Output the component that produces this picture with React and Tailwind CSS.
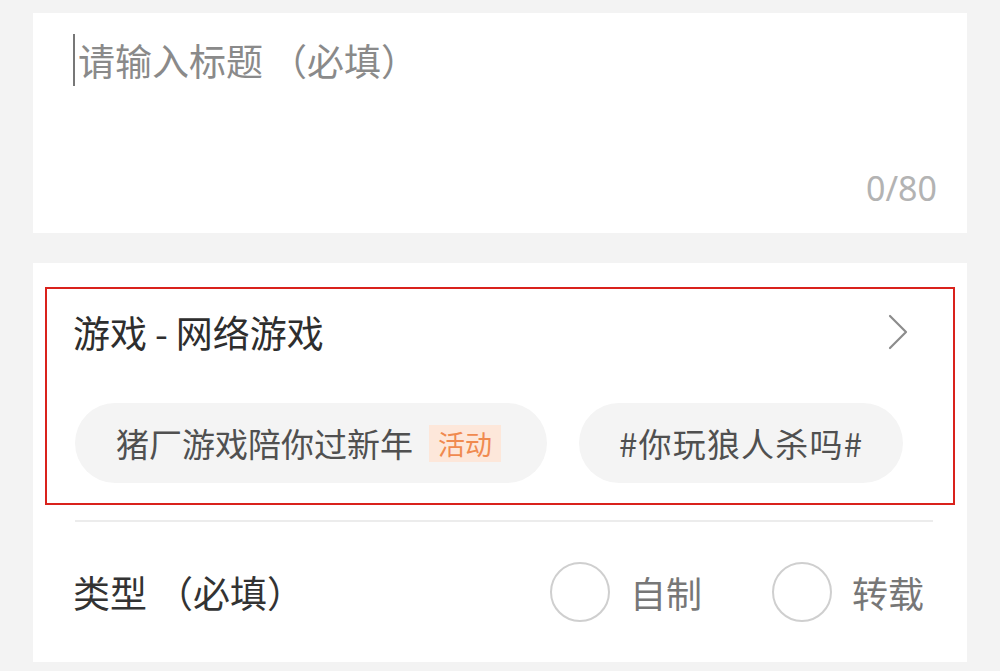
import React from "react";

const font = { fontFamily: '"Noto Sans CJK SC", "Noto Sans", sans-serif' };

function Radio({ label }) {
  return (
    <div className="flex items-center">
      <div className="w-[60px] h-[60px] rounded-full border-2 border-[#cfcfcf] bg-white" />
      <span className="ml-[20px] text-[36px] leading-none text-[#777]">{label}</span>
    </div>
  );
}

export default function App() {
  return (
    <div className="w-[1000px] h-[671px] bg-[#f3f3f3] overflow-hidden" style={font}>
      <div className="pt-[13px] pl-[33px]">
        {/* title card */}
        <div className="w-[934px] h-[220px] bg-white relative flex flex-col">
          <div className="flex items-center pt-[21px] pl-[40px]">
            <div className="w-[2px] h-[52px] bg-[#777] mr-[3px]" />
            <span className="text-[37px] leading-[50px] text-[#8a8a8a]">
              请输入标题<span className="mx-[7px]">（必填）</span>
            </span>
          </div>
          <div className="mt-auto mb-[28px] self-end pr-[30px] text-[34px] leading-none text-[#b3b3b3]" style={{ fontFamily: '"Noto Sans", sans-serif' }}>
            0/80
          </div>
        </div>

        {/* category card */}
        <div className="mt-[30px] w-[934px] h-[399px] bg-white pt-[24px] px-[12px]">
          <div className="h-[218px] border-2 border-[#d9221c] flex flex-col">
            <div className="h-[86px] flex items-center justify-between pl-[26px] pr-[44px]">
              <span className="text-[37px] leading-none text-[#2e2e2e]">
                游戏<span className="mx-[8px]">-</span>网络游戏
              </span>
              <svg width="22" height="36" viewBox="0 0 22 36" fill="none">
                <path d="M3 2 L19 18 L3 34" stroke="#8c8c8c" strokeWidth="2.2" strokeLinecap="round" strokeLinejoin="round" />
              </svg>
            </div>
            <div className="mt-[28px] flex items-center pl-[28px] gap-[32px]">
              <div className="h-[80px] rounded-full bg-[#f4f4f4] flex items-center pl-[41px] pr-[46px]">
                <span className="text-[33px] leading-none text-[#505050]">猪厂游戏陪你过新年</span>
                <span className="ml-[16px] h-[37px] px-[9px] bg-[#fde7da] text-[#f08a4f] text-[27px] leading-[37px]">活动</span>
              </div>
              <div className="h-[80px] rounded-full bg-[#f4f4f4] flex items-center px-[40px]">
                <span className="text-[33px] leading-none tracking-[1.2px] text-[#505050]">#你玩狼人杀吗#</span>
              </div>
            </div>
          </div>
          <div className="mt-[15px] ml-[30px] mr-[22px] h-[2px] bg-[#ececec]" />
          <div className="h-[140px] flex items-center pl-[28px]">
            <span className="text-[37px] leading-none text-[#333]">
              类型<span className="mx-[9px]">（必填）</span>
            </span>
            <div className="ml-[237px] flex items-center gap-[70px]">
              <Radio label="自制" />
              <Radio label="转载" />
            </div>
          </div>
        </div>
      </div>
    </div>
  );
}
